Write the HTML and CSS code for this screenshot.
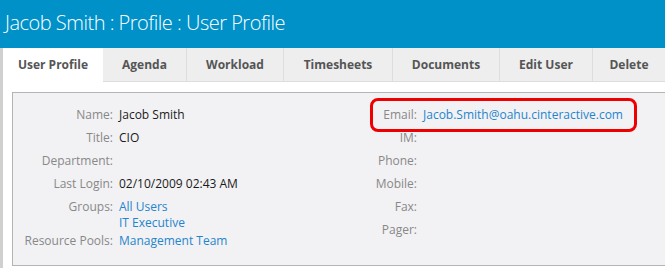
FILE: index.html
```html
<!DOCTYPE html>
<html lang="en">
<head>
  <meta charset="UTF-8">
  <title>Jacob Smith : Profile : User Profile</title>
  <link rel="stylesheet" href="styles.css">
</head>
<body>
<header class="page-header">
  <h1>Jacob Smith : Profile : User Profile</h1>
</header>

<div class="page-body">
  <nav class="tabs">
    <a href="#" class="tab active">User Profile</a>
    <a href="#" class="tab">Agenda</a>
    <a href="#" class="tab">Workload</a>
    <a href="#" class="tab">Timesheets</a>
    <a href="#" class="tab">Documents</a>
    <a href="#" class="tab">Edit User</a>
    <a href="#" class="tab">Delete</a>
  </nav>

  <section class="profile-panel">
    <div class="field-list left">
      <div class="field">
        <span class="label">Name:</span>
        <span class="value">Jacob Smith</span>
      </div>
      <div class="field">
        <span class="label">Title:</span>
        <span class="value">CIO</span>
      </div>
      <div class="field">
        <span class="label">Department:</span>
        <span class="value"></span>
      </div>
      <div class="field">
        <span class="label">Last Login:</span>
        <span class="value">02/10/2009 02:43 AM</span>
      </div>
      <div class="field tight">
        <span class="label">Groups:</span>
        <span class="value">
          <a href="#">All Users</a>
          <a href="#">IT Executive</a>
        </span>
      </div>
      <div class="field">
        <span class="label">Resource Pools:</span>
        <span class="value"><a href="#">Management Team</a></span>
      </div>
    </div>

    <div class="field-list right">
      <div class="field highlight">
        <span class="label">Email:</span>
        <span class="value"><a href="#">Jacob.Smith@oahu.cinteractive.com</a></span>
      </div>
      <div class="field">
        <span class="label">IM:</span>
        <span class="value"></span>
      </div>
      <div class="field">
        <span class="label">Phone:</span>
        <span class="value"></span>
      </div>
      <div class="field">
        <span class="label">Mobile:</span>
        <span class="value"></span>
      </div>
      <div class="field">
        <span class="label">Fax:</span>
        <span class="value"></span>
      </div>
      <div class="field">
        <span class="label">Pager:</span>
        <span class="value"></span>
      </div>
    </div>
  </section>
</div>
</body>
</html>
```

FILE: styles.css
```css
:root {
  --header: #0091c9;
  --tab-bg: #eeeeee;
  --tab-line: #dddddd;
  --tab-text: #555555;
  --panel-bg: #f2f2f4;
  --panel-border: #b4b4b4;
  --label: #888888;
  --text: #1a1a1a;
  --link: #1f85cc;
}

* {
  margin: 0;
  padding: 0;
  box-sizing: border-box;
}

body {
  font-family: 'Open Sans', 'Liberation Sans', sans-serif;
  font-size: 12px;
  color: var(--text);
  background: #ffffff;
  overflow: hidden;
}

.page-header {
  background: var(--header);
  height: 48px;
  padding: 9px 0 0 5px;
}

.page-header h1 {
  color: #ffffff;
  font-size: 20px;
  font-weight: 300;
  line-height: 28px;
  letter-spacing: -0.5px;
}

.page-body {
  border-left: 3px solid #d0d0d0;
  min-height: 220px;
}

/* Tabs */
.tabs {
  display: grid;
  grid-template-columns: 100px 83px 97px 109px 107px 93px 1fr;
  background: var(--tab-bg);
  border-bottom: 1px solid var(--tab-line);
  height: 34px;
}

.tab {
  display: flex;
  align-items: center;
  justify-content: center;
  color: var(--tab-text);
  font-weight: 700;
  font-size: 12px;
  text-decoration: none;
  border-left: 1px solid var(--tab-line);
  padding-bottom: 1px;
}

.tab:first-child,
.tab.active + .tab {
  border-left: none;
}

.tab.active {
  background: #ffffff;
  margin-bottom: -1px;
}

/* Profile panel */
.profile-panel {
  display: flex;
  margin: 10px 0 0 9px;
  background: var(--panel-bg);
  border: 1px solid var(--panel-border);
  border-right: none;
  padding: 10px 0 13px;
}

.field-list {
  display: flex;
  flex-direction: column;
}

.field-list.left {
  width: 356px;
}

.field {
  display: flex;
  gap: 6px;
  line-height: 16px;
  padding: 3.5px 0;
}

.field.tight {
  margin-bottom: -5px;
}

.label {
  color: var(--label);
  text-align: right;
  flex-shrink: 0;
}

.left .label {
  width: 100px;
}

.right .label {
  width: 48px;
}

.value {
  display: flex;
  flex-direction: column;
}

.value a {
  color: var(--link);
  text-decoration: none;
}

.field.highlight {
  position: relative;
}

.field.highlight::before {
  content: "";
  position: absolute;
  left: 1px;
  right: -14px;
  top: -5px;
  bottom: -6px;
  border: 3px solid #ee0000;
  border-radius: 8px;
}
```
